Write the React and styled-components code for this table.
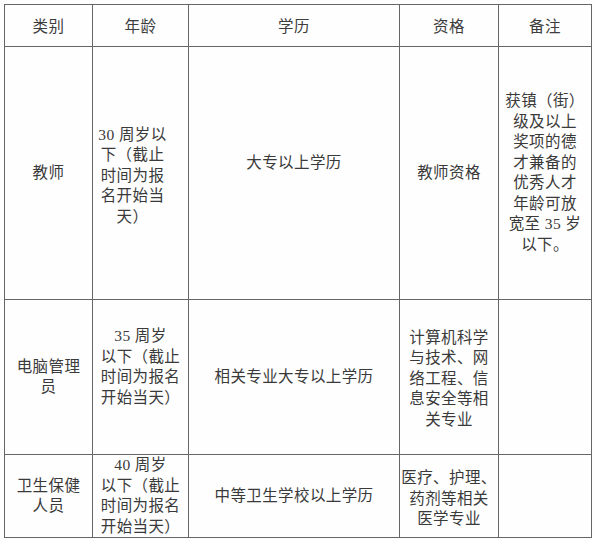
import styled, { createGlobalStyle } from 'styled-components';

const GlobalStyle = createGlobalStyle`
  html, body {
    margin: 0;
    padding: 0;
    background: #fefefe;
  }
  body {
    font-family: "Liberation Serif", "Noto Sans CJK SC", serif;
    color: #3a3a3a;
  }
`;

const Page = styled.div`
  padding: 4px 0 0 4px;
`;

const Table = styled.table`
  border-collapse: collapse;
  table-layout: fixed;
  width: 587px;
  border: 1.5px solid #5a5a5a;
`;

const Row = styled.tr`
  height: ${p => p.$h}px;
`;

const Cell = styled.td`
  border: 1px solid #666;
  padding: ${p => p.$down || 0}px ${p => p.$shift || 0}px ${p => p.$lift || 0}px 0;
  text-align: center;
  vertical-align: middle;
  font-size: 15.5px;
  line-height: 20.5px;
  letter-spacing: 0.4px;
  font-weight: 400;
`;

const HeadCell = styled(Cell).attrs({ as: 'th' })`
  font-weight: 400;
  color: #3d3d3d;
  padding-top: 3px;
`;

const Line = styled.span`
  display: block;
  white-space: nowrap;
`;

const cols = [88, 96, 211, 99, 93];
const heads = ['类别', '年龄', '学历', '资格', '备注'];

const rows = [
  {
    h: 253,
    cells: [
      { lines: ['教师'] },
      { lines: ['30 周岁以', '下（截止', '时间为报', '名开始当', '天）'], shift: 16, down: 6 },
      { lines: ['大专以上学历'], lift: 20 },
      { lines: ['教师资格'] },
      {
        lines: [
          '获镇（街）',
          '级及以上',
          '奖项的德',
          '才兼备的',
          '优秀人才',
          '年龄可放',
          '宽至 35 岁',
          '以下。',
        ],
      },
    ],
  },
  {
    h: 155,
    cells: [
      { lines: ['电脑管理', '员'] },
      { lines: ['35 周岁', '以下（截止', '时间为报名', '开始当天）'], lift: 20 },
      { lines: ['相关专业大专以上学历'] },
      { lines: ['计算机科学', '与技术、网', '络工程、信', '息安全等相', '关专业'], down: 4 },
      { lines: [] },
    ],
  },
  {
    h: 82,
    cells: [
      { lines: ['卫生保健', '人员'] },
      { lines: ['40 周岁', '以下（截止', '时间为报名', '开始当天）'] },
      { lines: ['中等卫生学校以上学历'] },
      { lines: ['医疗、护理、', '药剂等相关', '医学专业'], down: 6 },
      { lines: [] },
    ],
  },
];

export default function App() {
  return (
    <Page>
      <GlobalStyle />
      <Table>
        <colgroup>
          {cols.map((w, i) => (
            <col key={i} style={{ width: w }} />
          ))}
        </colgroup>
        <thead>
          <Row $h={42}>
            {heads.map(h => (
              <HeadCell key={h}>{h}</HeadCell>
            ))}
          </Row>
        </thead>
        <tbody>
          {rows.map((r, i) => (
            <Row key={i} $h={r.h}>
              {r.cells.map((c, j) => (
                <Cell key={j} $lift={c.lift} $shift={c.shift} $down={c.down}>
                  {c.lines.map((l, k) => (
                    <Line key={k}>{l}</Line>
                  ))}
                </Cell>
              ))}
            </Row>
          ))}
        </tbody>
      </Table>
    </Page>
  );
}
